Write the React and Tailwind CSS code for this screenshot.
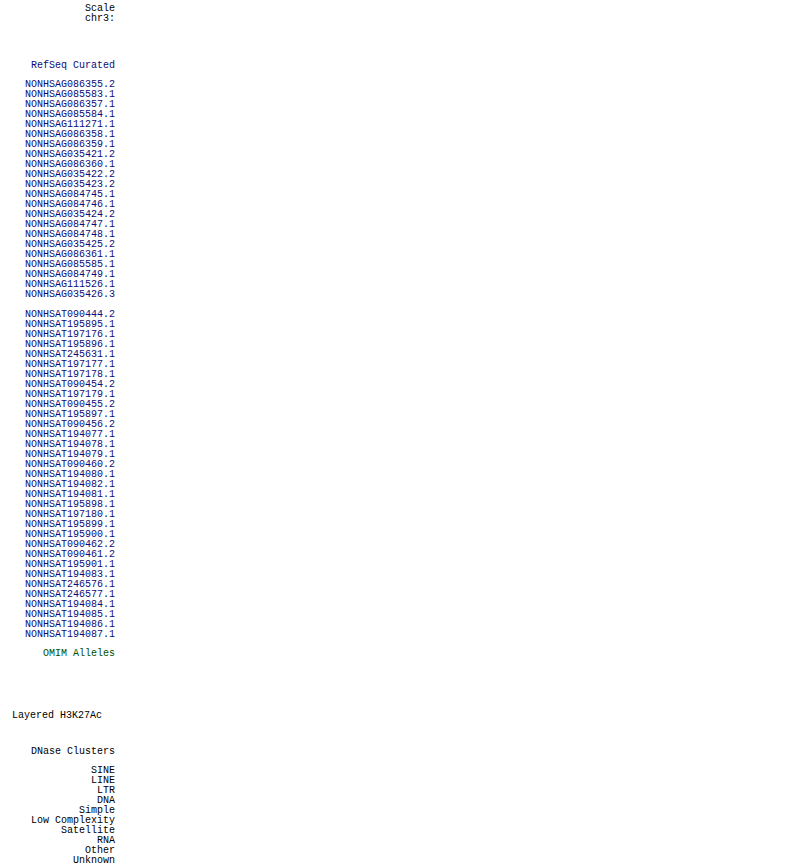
import React from 'react';

const genes = [
  'NONHSAG086355.2', 'NONHSAG085583.1', 'NONHSAG086357.1', 'NONHSAG085584.1',
  'NONHSAG111271.1', 'NONHSAG086358.1', 'NONHSAG086359.1', 'NONHSAG035421.2',
  'NONHSAG086360.1', 'NONHSAG035422.2', 'NONHSAG035423.2', 'NONHSAG084745.1',
  'NONHSAG084746.1', 'NONHSAG035424.2', 'NONHSAG084747.1', 'NONHSAG084748.1',
  'NONHSAG035425.2', 'NONHSAG086361.1', 'NONHSAG085585.1', 'NONHSAG084749.1',
  'NONHSAG111526.1', 'NONHSAG035426.3',
];

const transcripts = [
  'NONHSAT090444.2', 'NONHSAT195895.1', 'NONHSAT197176.1', 'NONHSAT195896.1',
  'NONHSAT245631.1', 'NONHSAT197177.1', 'NONHSAT197178.1', 'NONHSAT090454.2',
  'NONHSAT197179.1', 'NONHSAT090455.2', 'NONHSAT195897.1', 'NONHSAT090456.2',
  'NONHSAT194077.1', 'NONHSAT194078.1', 'NONHSAT194079.1', 'NONHSAT090460.2',
  'NONHSAT194080.1', 'NONHSAT194082.1', 'NONHSAT194081.1', 'NONHSAT195898.1',
  'NONHSAT197180.1', 'NONHSAT195899.1', 'NONHSAT195900.1', 'NONHSAT090462.2',
  'NONHSAT090461.2', 'NONHSAT195901.1', 'NONHSAT194083.1', 'NONHSAT246576.1',
  'NONHSAT246577.1', 'NONHSAT194084.1', 'NONHSAT194085.1', 'NONHSAT194086.1',
  'NONHSAT194087.1',
];

const repeats = ['SINE', 'LINE', 'LTR', 'DNA', 'Simple', 'Low Complexity', 'Satellite', 'RNA', 'Other', 'Unknown'];

function Row({ children, className = '' }) {
  return <div className={`h-[10px] leading-[10px] whitespace-pre ${className}`}>{children}</div>;
}

export default function App() {
  return (
    <div
      className="w-[800px] h-[865px] bg-white overflow-hidden text-[10px] text-black"
      style={{ fontFamily: '"Liberation Mono", "DejaVu Sans Mono", monospace' }}
    >
      <div className="w-[115px] flex flex-col text-right pt-[4px]">
        {/* ruler */}
        <Row>Scale</Row>
        <Row>chr3:</Row>

        {/* gene tracks */}
        <Row className="mt-[37px] text-[#0c0c78]">RefSeq Curated</Row>
        <div className="mt-[9px] flex flex-col text-[#0c0c78]">
          {genes.map(g => <Row key={g}>{g}</Row>)}
        </div>
        <div className="mt-[10px] flex flex-col text-[#0c0c78]">
          {transcripts.map(t => <Row key={t}>{t}</Row>)}
        </div>

        <Row className="mt-[9px] text-[#005000]">OMIM Alleles</Row>

        <Row className="mt-[52px] text-left pl-[12px] w-[140px]">Layered H3K27Ac</Row>

        <Row className="mt-[26px]">DNase Clusters</Row>
        <div className="mt-[9px] flex flex-col">
          {repeats.map(r => <Row key={r}>{r}</Row>)}
        </div>
      </div>
    </div>
  );
}
